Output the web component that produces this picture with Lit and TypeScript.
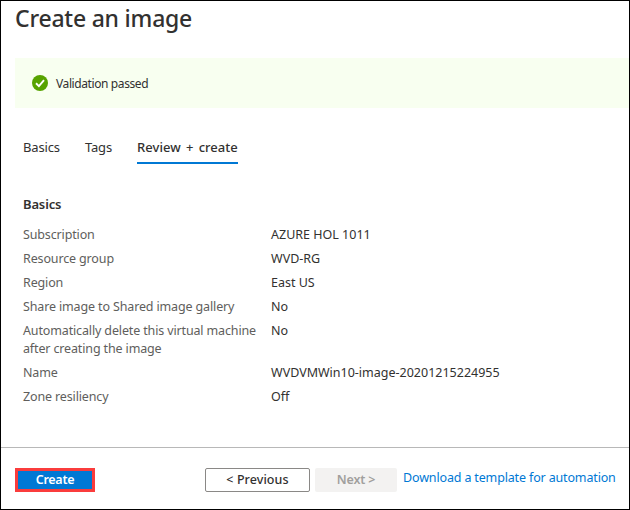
import { LitElement, html, css } from "lit";
import { customElement } from "lit/decorators.js";

const details = [
  ["Subscription", "AZURE HOL 1011"],
  ["Resource group", "WVD-RG"],
  ["Region", "East US"],
  ["Share image to Shared image gallery", "No"],
  ["Automatically delete this virtual machine after creating the image", "No"],
  ["Name", "WVDVMWin10-image-20201215224955"],
  ["Zone resiliency", "Off"],
];

@customElement("app-root")
export class AppRoot extends LitElement {
  static styles = css`
    :host {
      display: flex;
      flex-direction: column;
      box-sizing: border-box;
      width: 630px;
      height: 510px;
      border: 1px solid #000;
      background: #fff;
      color: #323130;
      font: 12.5px/18px "Noto Sans", "Open Sans", sans-serif;
      overflow: hidden;
      white-space: nowrap;
    }
    h1 {
      margin: 1px 0 0 14px;
      font-size: 23px;
      line-height: 32px;
      font-weight: 500;
      letter-spacing: -0.22px;
    }
    .banner {
      display: flex;
      align-items: center;
      gap: 8px;
      height: 50px;
      margin: 24px 0 0 14px;
      padding-left: 17px;
      background: #f8fff0;
    }
    .banner svg { display: block; }
    .message { font-size: 12px; letter-spacing: -0.4px; padding-top: 1px; }
    .tabs {
      display: flex;
      gap: 25px;
      margin: 29px 0 0 22px;
      font-size: 13px;
      letter-spacing: -0.15px;
    }
    .tab { height: 25px; padding-top: 1px; box-sizing: border-box; }
    .active {
      font-weight: 500;
      height: 27px;
      letter-spacing: 0.04px;
      word-spacing: 1.8px;
      border-bottom: 2px solid #0078d4;
    }
    h2 {
      margin: 31px 0 0 22px;
      font-size: 13px;
      line-height: 18px;
      font-weight: 600;
      letter-spacing: -0.15px;
    }
    dl {
      display: grid;
      grid-template-columns: 238px 1fr;
      column-gap: 10px;
      row-gap: 6px;
      margin: 13px 0 0 22px;
    }
    dt { color: #605e5c; white-space: normal; letter-spacing: -0.14px; }
    dd { margin: 0; }
    footer {
      display: flex;
      box-sizing: border-box;
      height: 62px;
      margin-top: auto;
      padding: 20px 0 0 14px;
      border-top: 1px solid #b8b8b8;
    }
    button {
      box-sizing: border-box;
      height: 24px;
      padding: 0;
      border-radius: 2px;
      font: 600 12.5px/18px "Noto Sans", "Open Sans", sans-serif;
      letter-spacing: -0.15px;
    }
    .create {
      width: 80px;
      padding-bottom: 2px;
      border: 3px solid #fa3c3c;
      border-radius: 0;
      background: #0078d4;
      color: #fff;
      letter-spacing: -0.25px;
    }
    .previous {
      width: 105px;
      margin-left: 110px;
      border: 1px solid #8a8886;
      background: #fff;
      color: #323130;
      font-weight: 500;
      letter-spacing: 0.08px;
    }
    .next {
      width: 82px;
      margin-left: 5px;
      border: 0;
      background: #f3f2f1;
      color: #a19f9d;
    }
    a {
      margin: 1px 0 0 6px;
      color: #0078d4;
      text-decoration: none;
      letter-spacing: -0.15px;
    }
  `;

  render() {
    return html`
      <h1>Create an image</h1>
      <div class="banner">
        <svg width="16" height="16" viewBox="0 0 16 16">
          <circle cx="8" cy="8" r="8" fill="#57a300" />
          <path d="M4 8.3 6.9 11.1 12 5.2" fill="none" stroke="#fff" stroke-width="1.9" />
        </svg>
        <span class="message">Validation passed</span>
      </div>
      <nav class="tabs">
        <span class="tab">Basics</span>
        <span class="tab">Tags</span>
        <span class="tab active">Review + create</span>
      </nav>
      <h2>Basics</h2>
      <dl>
        ${details.map(([label, value]) => html`<dt>${label}</dt><dd>${value}</dd>`)}
      </dl>
      <footer>
        <button class="create">Create</button>
        <button class="previous">&lt; Previous</button>
        <button class="next" disabled>Next &gt;</button>
        <a>Download a template for automation</a>
      </footer>
    `;
  }
}
